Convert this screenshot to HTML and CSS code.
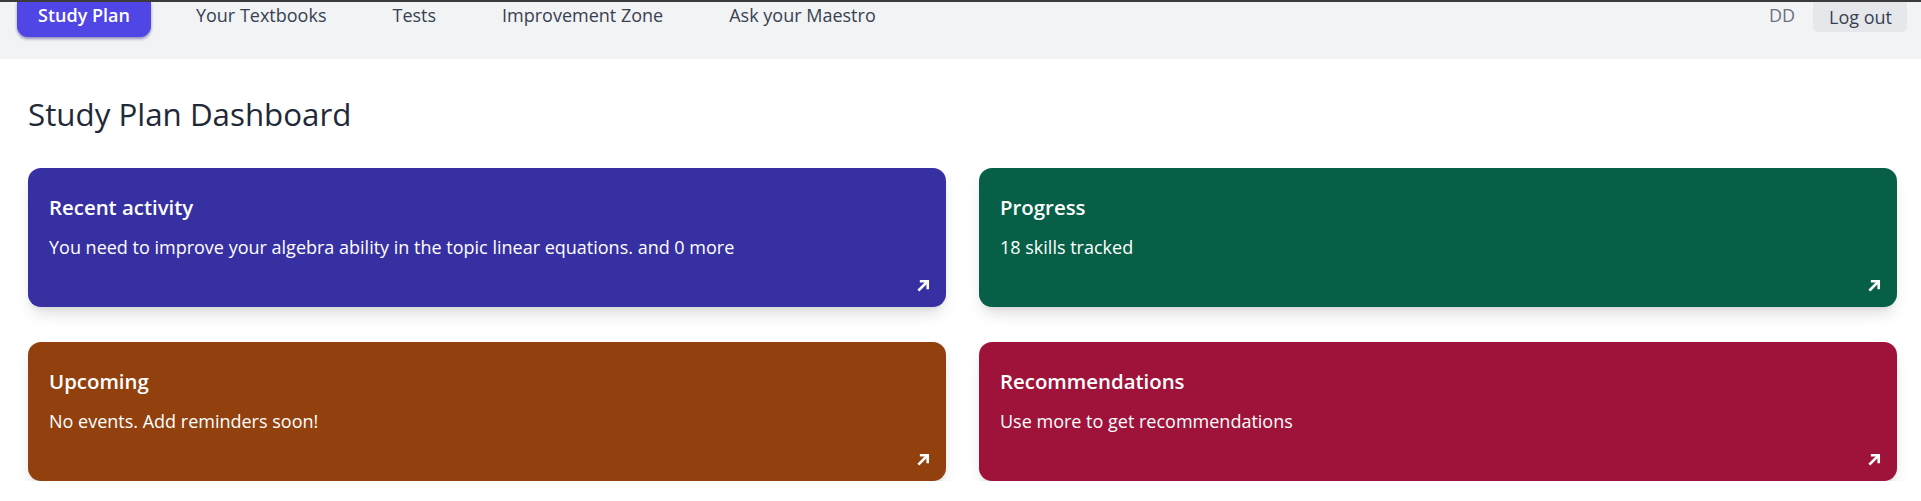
FILE: index.html
```html
<!DOCTYPE html>
<html lang="en">
<head>
<meta charset="utf-8">
<title>Study Plan Dashboard</title>
<link rel="stylesheet" href="styles.css">
</head>
<body>
<header class="topbar">
  <nav class="nav-links">
    <a class="nav-item active" href="#">Study Plan</a>
    <a class="nav-item" href="#">Your Textbooks</a>
    <a class="nav-item" href="#">Tests</a>
    <a class="nav-item" href="#">Improvement Zone</a>
    <a class="nav-item" href="#">Ask your Maestro</a>
  </nav>
  <div class="nav-user">
    <span class="initials">DD</span>
    <button class="logout">Log out</button>
  </div>
</header>
<main class="page">
  <h1 class="page-title">Study Plan Dashboard</h1>
  <section class="card-grid">
    <article class="card card-indigo">
      <h2 class="card-title">Recent activity</h2>
      <p class="card-text">You need to improve your algebra ability in the topic linear equations. and 0 more</p>
      <div class="card-foot"><svg class="arrow" viewBox="0 0 16 16" width="15" height="15"><path d="M3.5 12.5 L11.5 4.5" /><path d="M5.5 3.5 H12.5 V10.5" /></svg></div>
    </article>
    <article class="card card-emerald">
      <h2 class="card-title">Progress</h2>
      <p class="card-text">18 skills tracked</p>
      <div class="card-foot"><svg class="arrow" viewBox="0 0 16 16" width="15" height="15"><path d="M3.5 12.5 L11.5 4.5" /><path d="M5.5 3.5 H12.5 V10.5" /></svg></div>
    </article>
    <article class="card card-amber">
      <h2 class="card-title">Upcoming</h2>
      <p class="card-text">No events. Add reminders soon!</p>
      <div class="card-foot"><svg class="arrow" viewBox="0 0 16 16" width="15" height="15"><path d="M3.5 12.5 L11.5 4.5" /><path d="M5.5 3.5 H12.5 V10.5" /></svg></div>
    </article>
    <article class="card card-rose">
      <h2 class="card-title">Recommendations</h2>
      <p class="card-text">Use more to get recommendations</p>
      <div class="card-foot"><svg class="arrow" viewBox="0 0 16 16" width="15" height="15"><path d="M3.5 12.5 L11.5 4.5" /><path d="M5.5 3.5 H12.5 V10.5" /></svg></div>
    </article>
  </section>
</main>
</body>
</html>
```
FILE: styles.css
```css
* { box-sizing: border-box; }

body {
  margin: 0;
  font-family: "Open Sans", "Noto Sans", sans-serif;
  background: #ffffff;
  color: #1f2937;
}

.topbar {
  height: 59px;
  background: #f1f3f5;
  border-top: 2px solid #3b3b3b;
  display: flex;
  justify-content: space-between;
  align-items: flex-start;
  padding: 0 14px 0 17px;
}

.nav-links {
  display: flex;
  gap: 24px;
}

.nav-item {
  display: block;
  height: 35px;
  line-height: 27px;
  padding: 0 21px;
  font-size: 18px;
  color: #374151;
  text-decoration: none;
  border-radius: 0 0 11px 11px;
}

.nav-item.active {
  background: #4f46e5;
  color: #ffffff;
  font-weight: 600;
  box-shadow: 0 2px 3px rgba(30, 20, 120, 0.45);
}

.nav-user {
  display: flex;
  align-items: flex-start;
  gap: 18px;
}

.initials {
  font-size: 18px;
  line-height: 27px;
  color: #6b7280;
}

.logout {
  font-family: inherit;
  font-size: 18px;
  line-height: 27px;
  height: 30px;
  padding: 0 15px 0 16px;
  border: none;
  border-radius: 0 0 6px 6px;
  background: #e5e7eb;
  color: #374151;
}

.page {
  padding: 35px 24px 0 28px;
}

.page-title {
  margin: 0 0 34px;
  font-size: 31.3px;
  line-height: 40px;
  font-weight: 400;
  color: #1f2937;
}

.card-grid {
  display: grid;
  grid-template-columns: 1fr 1fr;
  column-gap: 33px;
  row-gap: 35px;
}

.card {
  height: 139px;
  border-radius: 13px;
  padding: 25px 15px 14px 21px;
  display: flex;
  flex-direction: column;
  color: #ffffff;
  box-shadow: 0 10px 15px -3px rgba(0, 0, 0, 0.12), 0 4px 6px -4px rgba(0, 0, 0, 0.12);
}

.card-indigo { background: #3730a3; }
.card-emerald { background: #065f46; }
.card-amber { background: #92400e; }
.card-rose { background: #9f1239; }

.card-title {
  margin: 0 0 13px;
  font-size: 20.4px;
  line-height: 28px;
  font-weight: 600;
}

.card-text {
  margin: 0;
  font-size: 18px;
  line-height: 26px;
}

.card-foot {
  margin-top: auto;
  align-self: flex-end;
  display: flex;
}

.arrow {
  fill: none;
  stroke: #ffffff;
  stroke-width: 2.8;
  stroke-linecap: square;
}
```
